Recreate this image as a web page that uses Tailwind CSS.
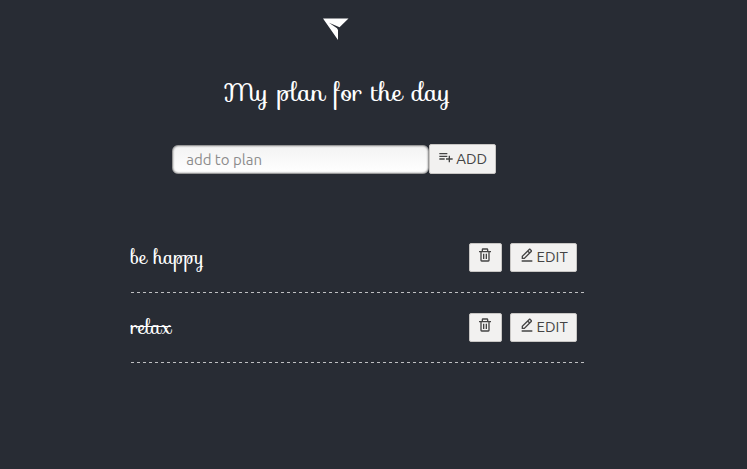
<!DOCTYPE html>
<html lang="en">
<head>
<meta charset="utf-8">
<meta name="viewport" content="width=device-width, initial-scale=1">
<title>My plan for the day</title>
<script src="https://cdn.jsdelivr.net/npm/@tailwindcss/browser@4"></script>
</head>
<body class="min-h-screen bg-[#282c34] font-['Ubuntu','Noto_Sans',sans-serif] text-white">
<main class="flex w-[90%] flex-col items-center pt-4">
  <svg class="h-6 w-7" viewBox="0 0 28 24" fill="#fff" aria-hidden="true"><path d="M1 2.5H26.5L17.5 11.3L7 6.8L15 12.2L16 14V24Z"/></svg>
  <h1 class="mt-[33px] ml-[2px] font-['Sofia','Liberation_Serif',cursive] text-[25px] leading-10">My plan for the day</h1>
  <form class="mt-[31px] mr-1 flex items-end" onsubmit="return false">
    <input type="text" aria-label="Add to plan" placeholder="add to plan" class="h-[29px] w-[257px] rounded-md border border-[#999] bg-linear-to-b from-[#f3f3f3] to-white px-[13px] text-[15px] text-[#444] shadow-[inset_0_0_2px_#777] placeholder:text-[#8c8c8c]">
    <button type="submit" class="flex h-[30px] items-center gap-[2px] rounded-xs border border-[#c8c6c4] bg-[#f2f1f0] px-2 text-[15px] text-[#444]">
      <svg class="mb-1 size-4" viewBox="0 0 24 24" fill="currentColor" aria-hidden="true"><path d="M14 10H2v2h12v-2zm0-4H2v2h12V6zm4 8v-4h-2v4h-4v2h4v4h2v-4h4v-2h-4zM2 16h8v-2H2v2z"/></svg><span class="pt-px">ADD</span></button>
  </form>
  <ul class="mt-[49px] ml-[3px] w-[494px] max-w-full pl-10">
    <li class="flex h-[70px] items-center bg-[repeating-linear-gradient(90deg,#bfc0c2_0_3px,transparent_3px_6px)] bg-[length:100%_1px] bg-bottom bg-no-repeat pr-2 pb-[2px]">
      <span class="flex-1 font-['Sofia','Liberation_Serif',cursive] text-[19px]">be happy</span>
      <button type="button" aria-label="Delete be happy" class="mr-2 flex h-[29px] w-[33px] items-center justify-center rounded-xs border border-[#c8c6c4] bg-[#f2f1f0] text-[#444]">
        <svg class="mb-1 size-4" viewBox="0 0 24 24" fill="currentColor" aria-hidden="true"><path d="M5 20a2 2 0 0 0 2 2h10a2 2 0 0 0 2-2V8h2V6h-4V4a2 2 0 0 0-2-2H9a2 2 0 0 0-2 2v2H3v2h2zM9 4h6v2H9zM7 8h10v12H7z" fill-rule="evenodd"/><path d="M9 10h2v8H9zm4 0h2v8h-2z"/></svg></button>
      <button type="button" class="flex h-[29px] w-[67px] items-center justify-center gap-[2px] rounded-xs border border-[#c8c6c4] bg-[#f2f1f0] text-[15px] text-[#444]">
        <svg class="mb-1 size-4" viewBox="0 0 24 24" fill="currentColor" aria-hidden="true"><path d="M19.045 7.401c.378-.378.586-.88.586-1.414s-.208-1.036-.586-1.414l-1.586-1.586c-.378-.378-.88-.586-1.414-.586s-1.036.208-1.413.585L4 13.585V18h4.413L19.045 7.401zm-3-3 1.587 1.585-1.59 1.584-1.586-1.585 1.589-1.584zM6 16v-1.585l7.04-7.018 1.586 1.586L7.587 16H6zm-2 4h16v2H4z"/></svg><span class="pt-px">EDIT</span></button>
    </li>
    <li class="flex h-[70px] items-center bg-[repeating-linear-gradient(90deg,#bfc0c2_0_3px,transparent_3px_6px)] bg-[length:100%_1px] bg-bottom bg-no-repeat pr-2 pb-[2px]">
      <span class="flex-1 font-['Sofia','Liberation_Serif',cursive] text-[19px]"><s class="decoration-1">relax</s></span>
      <button type="button" aria-label="Delete relax" class="mr-2 flex h-[29px] w-[33px] items-center justify-center rounded-xs border border-[#c8c6c4] bg-[#f2f1f0] text-[#444]">
        <svg class="mb-1 size-4" viewBox="0 0 24 24" fill="currentColor" aria-hidden="true"><path d="M5 20a2 2 0 0 0 2 2h10a2 2 0 0 0 2-2V8h2V6h-4V4a2 2 0 0 0-2-2H9a2 2 0 0 0-2 2v2H3v2h2zM9 4h6v2H9zM7 8h10v12H7z" fill-rule="evenodd"/><path d="M9 10h2v8H9zm4 0h2v8h-2z"/></svg></button>
      <button type="button" class="flex h-[29px] w-[67px] items-center justify-center gap-[2px] rounded-xs border border-[#c8c6c4] bg-[#f2f1f0] text-[15px] text-[#444]">
        <svg class="mb-1 size-4" viewBox="0 0 24 24" fill="currentColor" aria-hidden="true"><path d="M19.045 7.401c.378-.378.586-.88.586-1.414s-.208-1.036-.586-1.414l-1.586-1.586c-.378-.378-.88-.586-1.414-.586s-1.036.208-1.413.585L4 13.585V18h4.413L19.045 7.401zm-3-3 1.587 1.585-1.59 1.584-1.586-1.585 1.589-1.584zM6 16v-1.585l7.04-7.018 1.586 1.586L7.587 16H6zm-2 4h16v2H4z"/></svg><span class="pt-px">EDIT</span></button>
    </li>
  </ul>
</main>
</body>
</html>
